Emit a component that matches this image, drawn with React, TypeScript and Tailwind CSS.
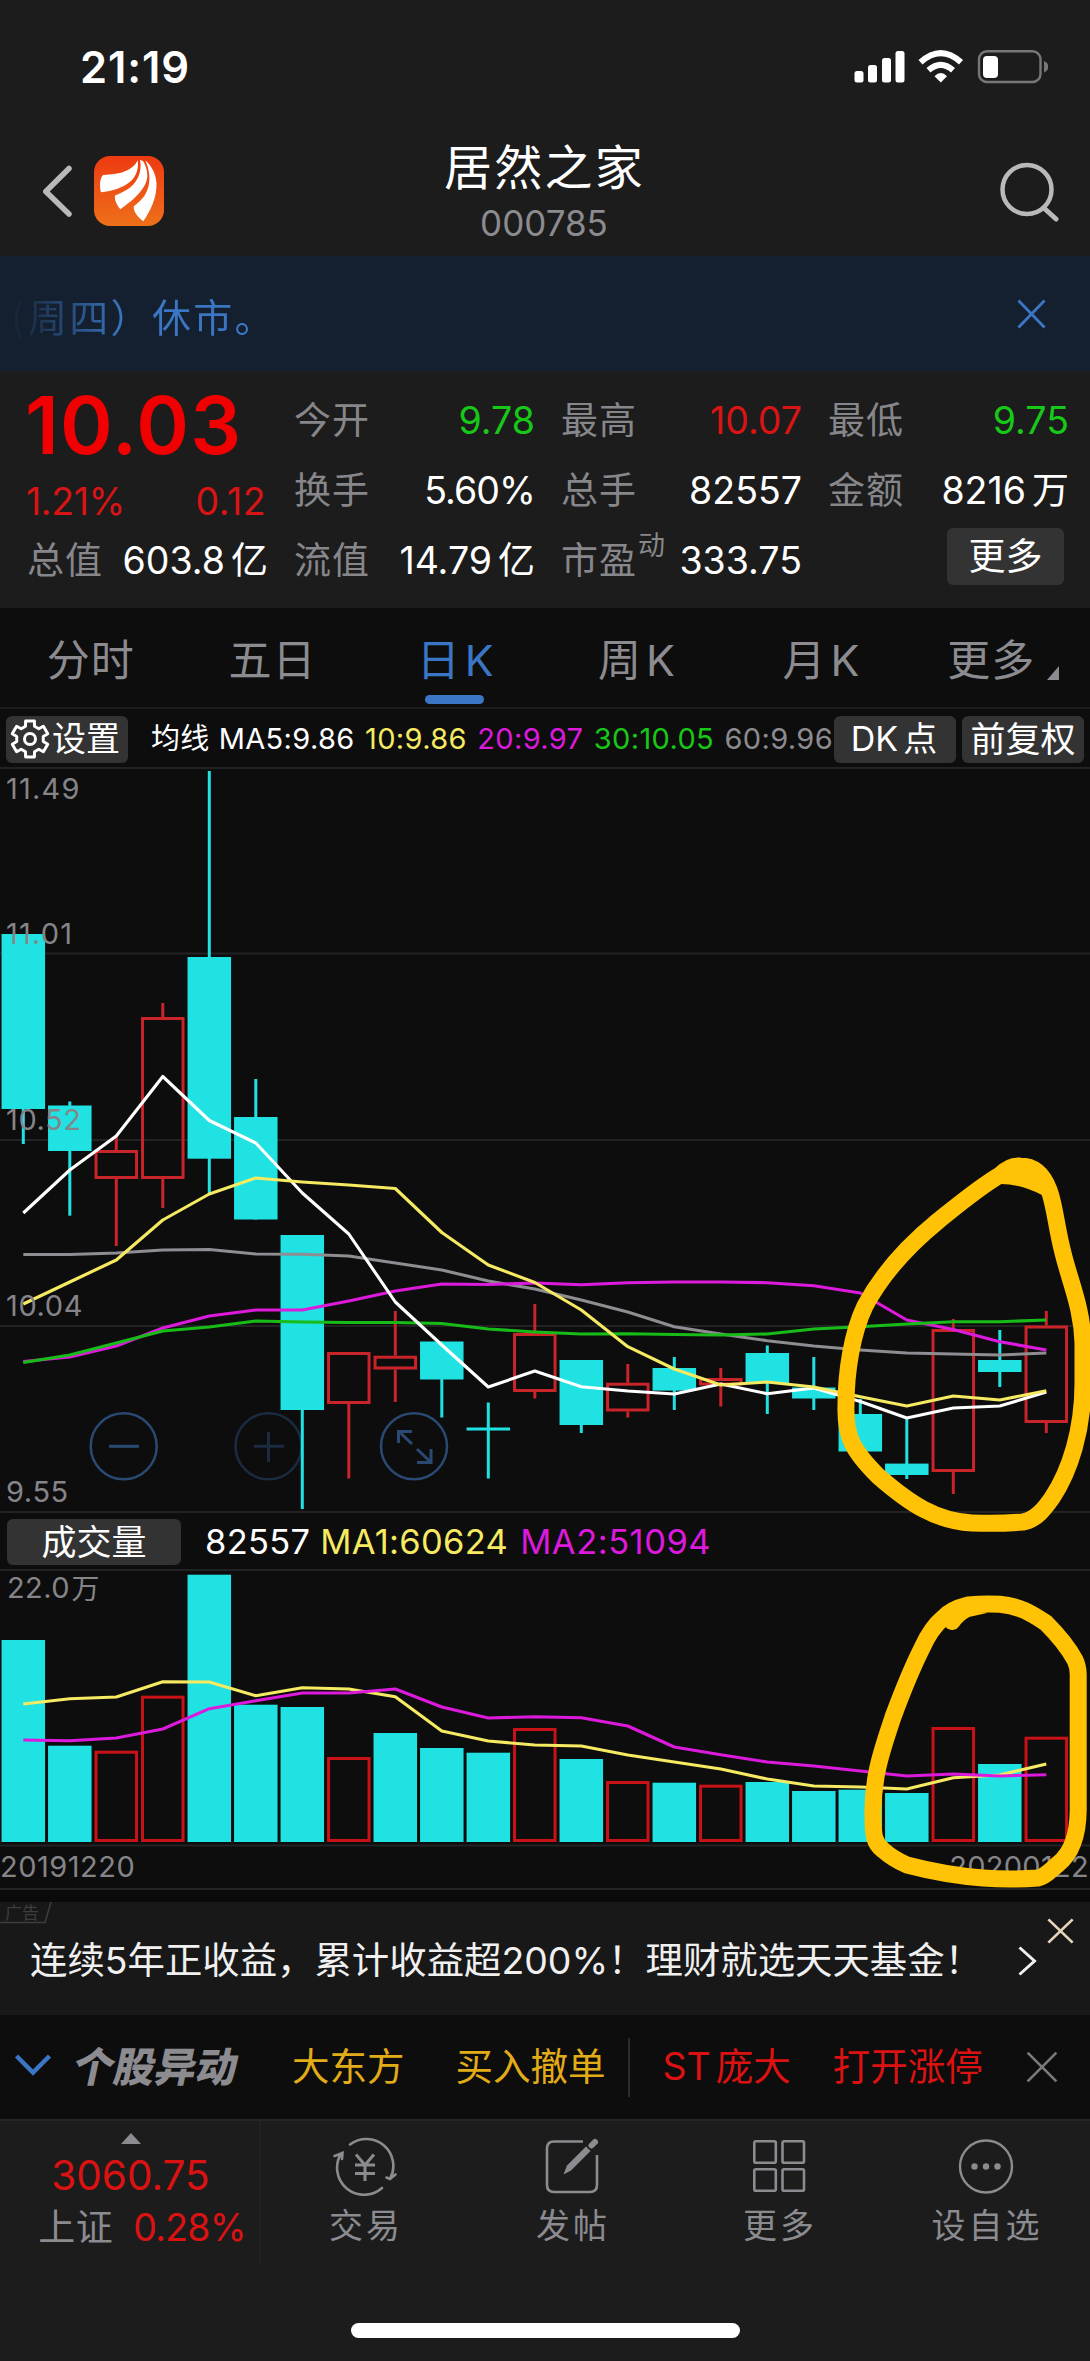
import type { ReactNode } from "react"

type Candle = {
  high: number
  top: number
  bottom: number
  low: number
  up?: boolean
  vol: number
}

const STEP = 46.5
const FIRST = 23.3
const BODY = 43.5
const VOL_BASE = 1842

const candles: Candle[] = [
  { high: 934, top: 934, bottom: 1109, low: 1144, vol: 1640 },
  { high: 1101.5, top: 1105.5, bottom: 1151, low: 1215.7, vol: 1745.7 },
  { high: 1136, top: 1150, bottom: 1179, low: 1246, up: true, vol: 1750.7 },
  { high: 1003, top: 1017, bottom: 1179, low: 1208, up: true, vol: 1695.7 },
  { high: 771, top: 957, bottom: 1158.7, low: 1194, vol: 1574.7 },
  { high: 1079, top: 1117, bottom: 1219.5, low: 1219.5, vol: 1704.7 },
  { high: 1235, top: 1235, bottom: 1410, low: 1509, vol: 1707 },
  { high: 1352, top: 1352, bottom: 1404, low: 1478.5, up: true, vol: 1757 },
  { high: 1311, top: 1355.7, bottom: 1369.5, low: 1402, up: true, vol: 1733 },
  { high: 1341.5, top: 1341.5, bottom: 1379.5, low: 1417.5, vol: 1748 },
  { high: 1402.5, top: 1427.5, bottom: 1430.5, low: 1478.5, vol: 1752.7 },
  { high: 1304, top: 1333, bottom: 1392, low: 1398.5, up: true, vol: 1728 },
  { high: 1360, top: 1360, bottom: 1425, low: 1433, vol: 1759 },
  { high: 1364, top: 1382.7, bottom: 1411.5, low: 1417.5, up: true, vol: 1781 },
  { high: 1357, top: 1368, bottom: 1390.6, low: 1410, vol: 1782.7 },
  { high: 1368, top: 1378, bottom: 1385.5, low: 1406.5, up: true, vol: 1784.7 },
  { high: 1345.5, top: 1353, bottom: 1383, low: 1414, vol: 1782 },
  { high: 1357, top: 1387.5, bottom: 1398.5, low: 1410, vol: 1791 },
  { high: 1399, top: 1414, bottom: 1451.5, low: 1451.5, vol: 1789.7 },
  { high: 1419, top: 1463.6, bottom: 1475, low: 1479, vol: 1793 },
  { high: 1319, top: 1329, bottom: 1472, low: 1494, up: true, vol: 1727 },
  { high: 1330, top: 1360, bottom: 1372, low: 1387, vol: 1764 },
  { high: 1311, top: 1325.5, bottom: 1423, low: 1433, up: true, vol: 1736.7 },
]

// volume bars are hollow on up days, except the 9th session
const hollowVolume = (c: Candle, i: number) => Boolean(c.up) && i !== 8

const priceLines = [
  {
    color: "#8d8d92",
    ys: [1254.5, 1254.5, 1253, 1250, 1249.5, 1254, 1254.3, 1256, 1263, 1270, 1281, 1289, 1300, 1312, 1326.7, 1334, 1340.7, 1346, 1350, 1353, 1354, 1355, 1353],
  },
  {
    color: "#dc1adc",
    ys: [1361.5, 1357, 1346, 1328, 1316, 1310, 1310, 1301, 1291, 1284, 1284.5, 1283, 1284.7, 1282.7, 1282, 1282, 1282.7, 1285.7, 1293, 1320, 1329.5, 1341.7, 1350],
  },
  {
    color: "#18bc18",
    ys: [1362.5, 1355, 1343, 1331, 1327, 1321, 1322, 1322.5, 1322.5, 1323.5, 1329, 1332, 1334, 1333.7, 1334.5, 1335, 1334, 1329, 1326.7, 1324, 1321.7, 1321.7, 1320],
  },
  {
    color: "#ffffff",
    ys: [1213, 1170, 1136, 1076.5, 1120.5, 1143, 1193, 1234, 1302, 1345, 1387, 1371, 1386.7, 1391, 1394, 1384, 1393.7, 1388, 1401.5, 1418, 1408, 1406, 1392],
  },
  {
    color: "#f5ea62",
    ys: [1304, 1282, 1260, 1220, 1194, 1178, 1182, 1185, 1188.5, 1232.5, 1265, 1282.5, 1310, 1346.7, 1369, 1385, 1382, 1387, 1396.7, 1406, 1396, 1400, 1390.7],
  },
]

const volumeLines = [
  {
    color: "#f5ea62",
    ys: [1704, 1698.7, 1697, 1681.7, 1682, 1695.7, 1687.7, 1689, 1696.7, 1731, 1741, 1745, 1746, 1755, 1762, 1769, 1779, 1786, 1787, 1789, 1777.7, 1775, 1764],
  },
  {
    color: "#dc1adc",
    ys: [1740, 1740.7, 1738, 1729, 1708.7, 1700.7, 1693, 1693, 1689, 1707, 1718, 1716.7, 1717.7, 1726, 1747, 1754.7, 1762, 1766, 1771, 1776, 1774, 1776, 1774.7],
  },
]

const centerX = (i: number) => FIRST + STEP * i

const toPoints = (ys: number[]) => ys.map((y, i) => `${centerX(i)},${y}`).join(" ")

function Cross({ className, width = 2.5 }: { className: string; width?: number }) {
  return (
    <svg viewBox="0 0 30 30" preserveAspectRatio="none" className={className} fill="none" stroke="currentColor" strokeWidth={width}>
      <path d="M1.5 1.5 28.5 28.5M28.5 1.5 1.5 28.5" />
    </svg>
  )
}

function StatusBar() {
  return (
    <div className="flex h-[130px] items-start justify-between pl-[80px] pr-[42px] pt-[45px]">
      <span className="text-[43.500px] font-semibold leading-[44px] tracking-[0.900px] text-white">21:19</span>
      <svg width="194" height="34" viewBox="854 50 194 34" className="mt-[5px]">
        <g fill="#fff">
          <rect x="854.5" y="71" width="9" height="11.5" rx="2.5" />
          <rect x="868" y="65" width="9" height="17.5" rx="2.5" />
          <rect x="882" y="58" width="9" height="24.5" rx="2.5" />
          <rect x="895.5" y="51" width="9" height="31.5" rx="2.5" />
          <path d="M940.8 82.5 934.5 76.2Q940.8 70 947 76.2Z" />
        </g>
        <g fill="none" stroke="#fff" strokeWidth="6">
          <path d="M928.5 70.3Q940.8 59.5 953 70.3" />
          <path d="M920.5 62.3Q940.8 44 961 62.3" />
        </g>
        <rect x="979" y="51.2" width="61.5" height="30.8" rx="8" fill="none" stroke="#777" strokeWidth="2.4" />
        <rect x="983" y="56" width="15" height="22" rx="4" fill="#fff" />
        <path d="M1044 61q4.500 2 4.500 5.700t-4.500 5.700z" fill="#777" />
      </svg>
    </div>
  )
}

function Logo() {
  return (
    <svg width="70" height="70" viewBox="94 156 70 70" className="ml-[21px]">
      <defs>
        <linearGradient id="logo" x1="0" y1="0" x2="0" y2="1">
          <stop offset="0" stopColor="#ee3a12" />
          <stop offset="1" stopColor="#ee7019" />
        </linearGradient>
      </defs>
      <rect x="94" y="156" width="70" height="70" rx="16" fill="url(#logo)" />
      <g fill="#fff">
        <path d="M137.700 160.300C133 170 122 174.500 103 175C99.500 178.500 99.500 187 101 192.300C112 191.500 124 187.500 131.500 180.500C136 176 139 169 137.700 160.300Z" />
        <path d="M140 160C142.500 172 137 184 126.500 190C122.500 192.300 119 194 115 195.500C114 200 117.500 206 120.500 209.300C130 202 148.500 189 147.300 174C147 169 145.500 165 143 161Z" />
        <path d="M145.300 160.500C150.500 172 151 184 145.500 194C142 200 137 203.500 133.800 206.500C133 212 138.500 217.500 143.300 221.300C151 210 157 197 156.500 183C156 174 151.500 165.500 145.300 160.500Z" />
      </g>
    </svg>
  )
}

function Header() {
  return (
    <header className="grid h-[126px] grid-cols-[1fr_auto_1fr] items-start">
      <div className="flex pl-[43px] pt-[26px]">
        <svg width="30" height="52" viewBox="0 0 30 52" className="mt-[9px]" fill="none" stroke="#b9b9b9" strokeWidth="5.500" strokeLinecap="round">
          <path d="M26 3.500 2.800 26.500 26 49" strokeLinejoin="round" />
        </svg>
        <Logo />
      </div>
      <div className="flex flex-col items-center pt-[12px]">
        <h1 className="pr-px text-[48px] leading-[52px] tracking-[2.200px] text-white">居然之家</h1>
        <span className="mr-[2px] mt-[8px] text-[35px] leading-[42px] text-[#8b8b90]">000785</span>
      </div>
      <svg width="60" height="60" viewBox="0 0 60 60" className="mr-[30px] mt-[32px] justify-self-end" fill="none" stroke="#b9b9b9" strokeWidth="4.500" strokeLinecap="round">
        <circle cx="27" cy="27.500" r="24.500" />
        <path d="M45 47 56 57" strokeWidth="5" />
      </svg>
    </header>
  )
}

function Notice() {
  return (
    <div className="flex h-[115px] items-center justify-between bg-[#14202f] pr-[44px]">
      <span className="mt-[2px] flex whitespace-nowrap bg-linear-to-r from-[#14202f] from-3% via-[#3a76c4] via-45% to-[#3a76c4] bg-clip-text pl-[11px] font-['Noto_Sans_CJK_SC',sans-serif] text-[39px] leading-[60px] tracking-[2.300px] text-transparent">
        <span className="w-[17px]">(</span>周四）休市。
      </span>
      <Cross className="h-[30px] w-[29px] text-[#3a76c4]" width={3} />
    </div>
  )
}

function Quote({ label, value, unit, tone = "text-white", sup }: { label: string; value: string; unit?: string; tone?: string; sup?: string }) {
  return (
    <div className="-ml-px -mr-[2px] flex h-[70px] items-center justify-between whitespace-nowrap leading-[50px]">
      <span className="flex text-[37px] tracking-[1px] text-[#87878b]">
        {label}
        {sup && <span className="-mt-[15px] ml-px text-[27px]">{sup}</span>}
      </span>
      <span className={`flex text-[37.500px] ${value.endsWith("%") ? "tracking-[-0.900px]" : ""} ${tone}`}>
        {value}
        {unit && <span className="ml-[6px] text-[37px]">{unit}</span>}
      </span>
    </div>
  )
}

function QuotePanel() {
  return (
    <section className="grid h-[237px] grid-cols-4 gap-x-[29px] pl-[28px] pr-[23px] pt-[15px]">
      <div>
        <div className="-ml-[3px] h-[86px] text-[80px] font-semibold leading-[78px] tracking-[1.200px] text-[#f00000]">10.03</div>
        <div className="-ml-[2px] flex h-[54px] justify-between text-[37.500px] leading-[59px] text-[#d81414]">
          <span className="tracking-[-0.400px]">1.21%</span>
          <span className="tracking-[0.500px]">0.12</span>
        </div>
        <Quote label="总值" value="603.8" unit="亿" />
      </div>
      <div>
        <Quote label="今开" value="9.78" tone="text-[#18c818]" />
        <Quote label="换手" value="5.60%" />
        <Quote label="流值" value="14.79" unit="亿" />
      </div>
      <div>
        <Quote label="最高" value="10.07" tone="text-[#d81414]" />
        <Quote label="总手" value="82557" />
        <Quote label="市盈" sup="动" value="333.75" />
      </div>
      <div>
        <Quote label="最低" value="9.75" tone="text-[#18c818]" />
        <Quote label="金额" value="8216" unit="万" />
        <button className="ml-auto mr-[3px] mt-[2px] block h-[57px] w-[117px] rounded-[6px] bg-[#333333] text-[37px] leading-[58px] text-white">更多</button>
      </div>
    </section>
  )
}

const tabs = [
  { label: "分时" },
  { label: "五日" },
  { label: "日", suffix: "K", shift: "pl-[3px]", active: true },
  { label: "周", suffix: "K", shift: "pl-[2px]" },
  { label: "月", suffix: "K", shift: "pl-[8px]" },
  { label: "更多", menu: true },
]

function Tabs() {
  return (
    <nav className="grid h-[101px] grid-cols-6 border-b-2 border-[#1c1c1e] bg-[#0d0d0d]">
      {tabs.map((tab) => (
        <div key={tab.label} className={`flex flex-col items-center ${tab.active ? "text-[#3a76c4]" : "text-[#8b8b90]"}`}>
          <span className={`mt-[22px] flex h-[60px] text-[43px] leading-[60px] tracking-[1px] ${tab.shift ?? ""}`}>
            {tab.label}
            {tab.suffix && <span className="ml-[4px]">{tab.suffix}</span>}
            {tab.menu && (
              <svg width="12" height="14" viewBox="0 0 12 14" className="-mr-[8px] ml-[12px] mt-[36px]">
                <path d="M12 0V14H0Z" fill="#8b8b90" />
              </svg>
            )}
          </span>
          {tab.active && <span className="mt-[5px] h-[9px] w-[59px] rounded-full bg-[#3a76c4]" />}
        </div>
      ))}
    </nav>
  )
}

function Gear() {
  const points: string[] = []
  for (let i = 0; i < 6; i++) {
    const base = (i * 60 - 90) * (Math.PI / 180)
    const spots: [number, number][] = [
      [-0.34, 13.5],
      [-0.24, 18.5],
      [0.24, 18.5],
      [0.34, 13.5],
    ]
    for (const [da, r] of spots) {
      points.push(`${20 + r * Math.cos(base + da)},${20 + r * Math.sin(base + da)}`)
    }
  }
  return (
    <svg width="40" height="40" viewBox="0 0 40 40" fill="none" stroke="#fff" strokeWidth="3" strokeLinejoin="round">
      <polygon points={points.join(" ")} />
      <circle cx="20" cy="20" r="5.500" />
    </svg>
  )
}

function Chip({ className, children }: { className: string; children: ReactNode }) {
  return (
    <button className={`flex shrink-0 items-center justify-center whitespace-nowrap rounded-[6px] bg-[#333333] text-white ${className}`}>{children}</button>
  )
}

function Averages() {
  return (
    <div className="flex h-[58px] items-center bg-[#0d0d0d] pl-[6px] pr-[6px] pt-[2px] text-[29px] leading-[46px]">
      <Chip className="h-[47px] w-[122px] pr-[4px] text-[34px]">
        <Gear />
        <span className="ml-[2px]">设置</span>
      </Chip>
      <div className="ml-[23px] flex w-[682px] justify-between whitespace-nowrap tracking-[0.350px]">
        <span className="flex text-white">
          均线<span className="ml-[9px]">MA5:9.86</span>
        </span>
        <span className="text-[#f5ea62]">10:9.86</span>
        <span className="text-[#dc1adc]">20:9.97</span>
        <span className="text-[#18c818]">30:10.05</span>
        <span className="text-[#8b8b90]">60:9.96</span>
      </div>
      <Chip className="ml-px h-[47px] w-[122px] pr-[2px] text-[34px]">
        DK<span className="ml-[5px]">点</span>
      </Chip>
      <Chip className="ml-auto h-[47px] w-[122px] text-[35px]">前复权</Chip>
    </div>
  )
}

function PriceChart() {
  return (
    <svg width="1090" height="746" viewBox="0 767 1090 746" className="block">
      <g stroke="#232325" strokeWidth="2">
        {[768, 953.5, 1140, 1326, 1512].map((y) => (
          <line key={y} x1="0" x2="1090" y1={y} y2={y} />
        ))}
      </g>

      <g fill="none" stroke="#2a4a74" strokeWidth="2.500">
        <circle cx="123.700" cy="1446.300" r="33" />
        <path d="M109 1446.300h30" strokeWidth="3" />
        <g stroke="#1a2b42">
          <circle cx="268.500" cy="1446.300" r="33" />
          <path d="M254 1446.300h30M268.500 1432v30" strokeWidth="3" />
        </g>
        <circle cx="414" cy="1446.300" r="33" />
        <path d="M412 1444 399 1431.500M398.500 1443V1431.500H412M417 1449 430.500 1462M431 1449V1462.500H417" strokeWidth="3" />
      </g>

      {candles.map((c, i) => {
        const x = centerX(i)
        if (c.up) {
          return (
            <g key={i} fill="none" stroke="#c8242a" strokeWidth="3">
              <path d={`M${x} ${c.high}V${c.top}M${x} ${c.bottom}V${c.low}`} />
              <rect x={x - BODY / 2 + 1.5} y={c.top + 1.5} width={BODY - 3} height={c.bottom - c.top - 3} />
            </g>
          )
        }
        return (
          <g key={i} fill="#20e2e2">
            <rect x={x - 1.5} y={c.high} width="3" height={c.low - c.high} />
            <rect x={x - BODY / 2} y={c.top} width={BODY} height={c.bottom - c.top} />
          </g>
        )
      })}

      {priceLines.map((line) => (
        <polyline key={line.color} points={toPoints(line.ys)} fill="none" stroke={line.color} strokeWidth="3.100" strokeLinejoin="round" />
      ))}

      <g fill="#858589" fontSize="29" letterSpacing="0.6">
        <text x="6" y="799" letterSpacing="1.2">11.49</text>
        <text x="6" y="944" letterSpacing="1.2">11.01</text>
        <text x="6" y="1130">10.52</text>
        <text x="6" y="1316">10.04</text>
        <text x="6" y="1502">9.55</text>
      </g>
    </svg>
  )
}

function VolumeChart() {
  return (
    <svg width="1090" height="321" viewBox="0 1569 1090 321" className="block">
      <g stroke="#232325" strokeWidth="2">
        <line x1="0" x2="1090" y1="1570" y2="1570" />
        <line x1="0" x2="1090" y1="1845.500" y2="1845.500" />
        <line x1="0" x2="1090" y1="1889" y2="1889" />
      </g>
      {candles.map((c, i) => {
        const x = centerX(i) - BODY / 2
        return hollowVolume(c, i) ? (
          <rect key={i} x={x + 1.5} y={c.vol + 1.5} width={BODY - 3} height={VOL_BASE - c.vol - 3} fill="none" stroke="#c81217" strokeWidth="3" />
        ) : (
          <rect key={i} x={x} y={c.vol} width={BODY} height={VOL_BASE - c.vol} fill="#20e2e2" />
        )
      })}
      {volumeLines.map((line) => (
        <polyline key={line.color} points={toPoints(line.ys)} fill="none" stroke={line.color} strokeWidth="3.100" strokeLinejoin="round" />
      ))}
      <g fill="#858589" fontSize="29">
        <text x="7" y="1598" letterSpacing="0.4">22.0</text>
        <text x="71.500" y="1599" fontSize="28">万</text>
        <text x="0" y="1877" letterSpacing="0.5">20191220</text>
        <text x="1089" y="1877" textAnchor="end" letterSpacing="0.3">20200122</text>
      </g>
    </svg>
  )
}

// hand drawn marker loops round the last few sessions
function Marker() {
  return (
    <svg width="1090" height="1122" viewBox="0 767 1090 1122" className="pointer-events-none absolute left-0 top-0" fill="none" stroke="#ffc205" strokeWidth="17" strokeLinejoin="round" strokeLinecap="round">
      <path d="M1000 1175C978 1188 958 1205 938 1221C905 1248 882 1274 865 1306C852 1333 846 1372 846 1405C845 1436 852 1450 878 1476C910 1504 936 1521 972 1523Q1000 1524 1023 1522C1036 1520 1045 1508 1052 1498C1070 1471 1083 1430 1083 1383V1343C1082 1308 1071 1285 1063 1253C1056 1226 1055 1206 1049 1190Q1040 1166 1020 1166Q1010 1165 1000 1175" />
      <path d="M999 1168Q1018 1151 1038 1164Q1052 1174 1056 1190L1042 1195Q1018 1183 998 1184Z" fill="#ffc205" stroke="none" />
      <path d="M952 1621.500Q957 1614 966 1609L984 1605M943 1618C950 1610 960 1607 968 1605Q984 1603.500 1000 1604.300C1022 1606 1035 1616 1046 1623C1054 1631 1068 1647 1075 1660Q1078 1666 1078.200 1674V1810C1078 1835 1072 1853 1058 1864C1050 1871 1044 1877 1038 1878Q1010 1880 983 1878Q945 1875 907 1865Q893 1859 883 1850C874 1843 873 1835 873 1816C872 1775 884 1745 893 1717C903 1690 912 1668 922 1648Q931 1628 943 1618Z" />
    </svg>
  )
}

function Charts() {
  return (
    <section className="relative bg-[#0d0d0d]">
      <PriceChart />
      <div className="flex h-[56px] items-center pl-[7px] pt-[2px] text-[34.500px] leading-[46px] tracking-[0.300px]">
        <Chip className="mr-[24px] h-[46px] w-[174px] text-[35px] tracking-normal">成交量</Chip>
        <span className="text-white">82557</span>
        <span className="ml-[10px] text-[#f5ea62]">MA1:60624</span>
        <span className="ml-[12px] tracking-[0.500px] text-[#dc1adc]">MA2:51094</span>
      </div>
      <VolumeChart />
      <Marker />
    </section>
  )
}

function AdBanner() {
  return (
    <div className="relative mt-[12px] flex h-[113px] items-center bg-[#181818]">
      <div className="absolute left-0 top-0 flex h-[22px] w-[52px] items-center text-[#3d3d3d]">
        <span className="pl-[5px] text-[17px] leading-[20px]">广告</span>
        <svg width="52" height="22" viewBox="0 0 52 22" className="absolute left-0 top-0" fill="none" stroke="#3d3d3d" strokeWidth="1.500">
          <path d="M0 20.500H45L51 0" />
        </svg>
      </div>
      <p className="ml-[30px] mt-[4px] whitespace-nowrap text-[37.400px] leading-[50px] text-[#f0f0f0]">
        连续5年正收益，累计收益超200%！理财就选天天基金！
      </p>
      <svg width="20" height="30" viewBox="0 0 20 30" className="absolute left-[1018px] top-[44px]" fill="none" stroke="#f0f0f0" strokeWidth="3">
        <path d="M1.500 1.500 16.500 15 1.500 28.500" />
      </svg>
      <Cross className="absolute left-[1047px] top-[16px] h-[26px] w-[27px] text-[#e6d5b8]" width={3} />
    </div>
  )
}

function EventTicker() {
  return (
    <div className="flex h-[104px] items-center whitespace-nowrap bg-[#0d0d0d] text-[37.500px] leading-[60px]">
      <svg width="38" height="24" viewBox="0 0 38 24" className="ml-[14px] mt-[-4px]" fill="none" stroke="#3a76c4" strokeWidth="4.500">
        <path d="M2.500 3 19 19.500 35.500 3" />
      </svg>
      <span className="ml-[22px] w-[163px] -skew-x-12 text-[41px] font-black text-[#8b8b90]">个股异动</span>
      <span className="ml-[55px] text-[#e2ac18]">大东方</span>
      <span className="ml-[51px] text-[#e2ac18]">买入撤单</span>
      <span className="ml-[22px] h-[59px] w-[2px] bg-[#2b2b2d]" />
      <span className="ml-[33px] flex text-[#dc1212]">
        ST<span className="ml-[5px]">庞大</span>
      </span>
      <span className="ml-[42px] text-[#dc1212]">打开涨停</span>
      <Cross className="ml-[43px] h-[32px] w-[32px] text-[#7a7a7e]" />
    </div>
  )
}

function TradeIcon() {
  return (
    <svg width="64" height="60" viewBox="0 0 64 60" fill="none" stroke="#8b8b90" strokeWidth="2.600" strokeLinecap="round">
      <path d="M17 8.500A27 27 0 0 1 57 43M57 43 53.500 41.500M57 43 62.500 38.500" />
      <path d="M49 52A27 27 0 0 1 8.500 17M1.500 20 9.500 17 9 23" />
      <path d="M23 18.500 32 29 41 18.500M22 29H42M22 37.500H42M32 29V45" strokeWidth="3" strokeLinecap="butt" />
    </svg>
  )
}

function PostIcon() {
  return (
    <svg width="64" height="60" viewBox="0 0 64 60" fill="none" stroke="#8b8b90" strokeWidth="2.600">
      <path d="M43 5.500H14Q7 5.500 7 12.500V49Q7 56 14 56H50Q57 56 57 49V19" />
      <path d="M23.500 38.500 27 29.500 46 10.500 50.500 15 31 34.500Z" fill="#8b8b90" stroke="none" />
      <path d="M51.500 9.500 55 6" strokeWidth="6" strokeLinecap="round" />
    </svg>
  )
}

function GridIcon() {
  return (
    <svg width="64" height="60" viewBox="0 0 64 60" fill="none" stroke="#8b8b90" strokeWidth="2.600">
      <rect x="7.300" y="5.300" width="21.500" height="21.500" rx="1.500" />
      <rect x="35.500" y="5.300" width="21.500" height="21.500" rx="1.500" />
      <rect x="7.300" y="33.300" width="21.500" height="21.500" rx="1.500" />
      <rect x="35.500" y="33.300" width="21.500" height="21.500" rx="1.500" />
    </svg>
  )
}

function DotsIcon() {
  return (
    <svg width="64" height="60" viewBox="0 0 64 60" fill="none" stroke="#8b8b90" strokeWidth="2.400">
      <circle cx="32" cy="30.500" r="26" />
      <g fill="#8b8b90" stroke="none">
        <circle cx="20.500" cy="30.500" r="3.200" />
        <circle cx="32" cy="30.500" r="3.200" />
        <circle cx="43.500" cy="30.500" r="3.200" />
      </g>
    </svg>
  )
}

const actions = [
  { label: "交易", icon: <TradeIcon /> },
  { label: "发帖", icon: <PostIcon /> },
  { label: "更多", icon: <GridIcon /> },
  { label: "设自选", icon: <DotsIcon /> },
]

function BottomNav() {
  return (
    <footer className="flex h-[242px] flex-col justify-between border-t-2 border-[#262628] bg-[#1c1c1c]">
      <div className="flex h-[142px]">
        <div className="flex w-[261px] shrink-0 flex-col items-center border-r-2 border-[#212122]">
          <svg width="20" height="11" viewBox="0 0 20 11" className="ml-[2px] mt-[12px]">
            <path d="M10 0 20 11H0Z" fill="#8b8b90" />
          </svg>
          <span className="ml-[2px] mt-[7px] text-[40.500px] leading-[50px] text-[#dc1212]">3060.75</span>
          <span className="flex pl-[25px] leading-[53px]">
            <span className="text-[37px] tracking-[0.500px] text-[#8b8b90]">上证</span>
            <span className="ml-[20px] text-[37.500px] tracking-[-0.800px] text-[#dc1212]">0.28%</span>
          </span>
        </div>
        {actions.map((action) => (
          <div key={action.label} className="flex w-[207px] flex-col items-center pt-[15px]">
            {action.icon}
            <span className="mt-[5px] pl-[3px] text-[34px] leading-[50px] tracking-[3px] text-[#8b8b90]">{action.label}</span>
          </div>
        ))}
      </div>
      <div className="mb-[23px] h-[15px] w-[389px] self-center rounded-full bg-white" />
    </footer>
  )
}

export default function App() {
  return (
    <main className="flex h-[2361px] w-[1090px] flex-col overflow-hidden bg-[#1c1c1c] font-['Inter','Noto_Sans_CJK_SC',sans-serif]">
      <StatusBar />
      <Header />
      <Notice />
      <QuotePanel />
      <Tabs />
      <Averages />
      <Charts />
      <div className="bg-[#0a0a0a]">
        <AdBanner />
      </div>
      <EventTicker />
      <BottomNav />
    </main>
  )
}
